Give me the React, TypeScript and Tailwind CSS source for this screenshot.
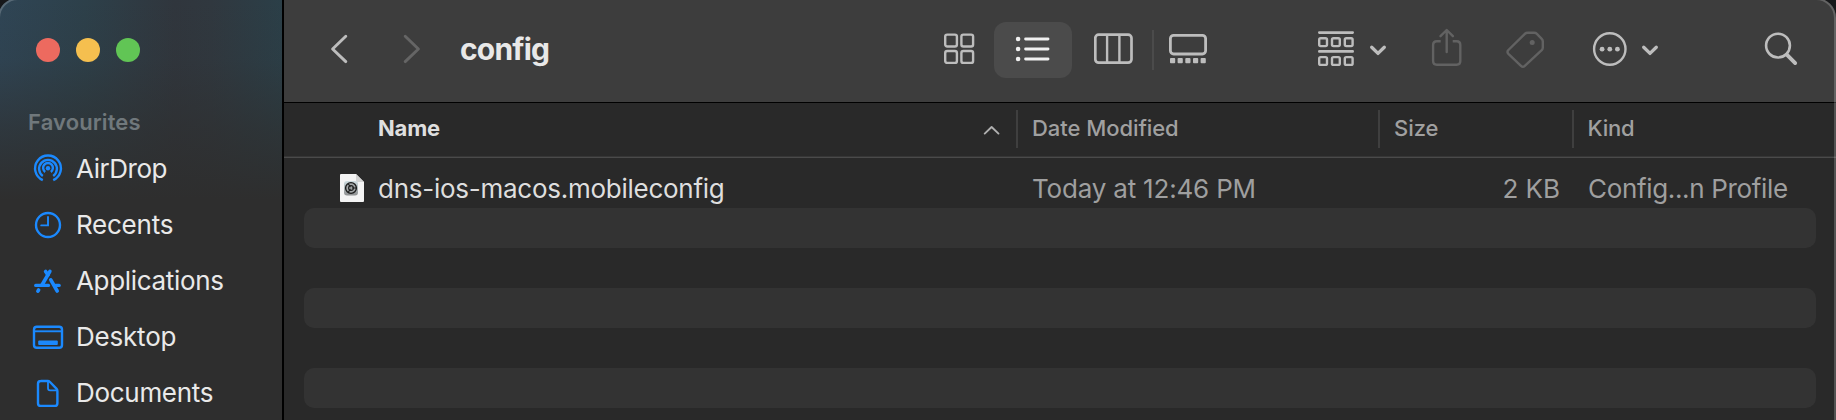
import type { ReactNode } from "react";

const favourites: { label: string; tracking: string; icon: ReactNode }[] = [
  {
    label: "AirDrop",
    tracking: "tracking-[-0.45px]",
    icon: (
      <>
        <circle cx="16" cy="27.3" r="2.2" fill="currentColor" stroke="none" />
        <path d="M13.2 30.9a4.9 4.9 0 1 1 5.6 0" />
        <path d="M10.8 35a8.9 8.9 0 1 1 10.4 0" />
        <path d="M10.8 39.2a12.9 12.9 0 1 1 10.4 0" />
      </>
    ),
  },
  {
    label: "Recents",
    tracking: "tracking-[-0.25px]",
    icon: (
      <>
        <circle cx="16" cy="28" r="12" />
        <path d="M16 20v8.4H9.2" strokeWidth="1.9" strokeLinecap="round" />
      </>
    ),
  },
  {
    label: "Applications",
    tracking: "tracking-[-0.32px]",
    icon: (
      <g strokeWidth="3.6" strokeLinecap="round">
        <path d="M17.9 18.4 10 32" />
        <path d="M13.6 18.4 16 22" />
        <path d="M18.8 26.8 25.2 38" />
        <path d="M3.7 32.4H16.5" strokeWidth="3.2" />
        <path d="M23.5 32.4H27.2" strokeWidth="3.2" />
        <path d="M6.6 37 5.9 38.2" />
      </g>
    ),
  },
  {
    label: "Desktop",
    tracking: "tracking-[-0.2px]",
    icon: (
      <>
        <rect x="2" y="17.7" width="28" height="21" rx="2.8" />
        <path d="M2 22.3H30" strokeWidth="1.9" />
        <rect x="6.2" y="31.6" width="19.6" height="4.4" rx="1" fill="currentColor" stroke="none" />
      </>
    ),
  },
  {
    label: "Documents",
    tracking: "tracking-[-0.3px]",
    icon: (
      <>
        <path d="M8.6 16H15.6Q17 16 18 17L24.4 23.6Q25.4 24.6 25.4 26V38.2Q25.4 40.9 22.7 40.9H8.7Q6 40.9 6 38.2V18.7Q6 16 8.7 16Z" />
        <path d="M16 16.5V23.2Q16 25.3 18.1 25.3H25" strokeWidth="1.8" />
      </>
    ),
  },
];

function Icon({ width, className, children }: { width: number; className?: string; children: ReactNode }) {
  return (
    <svg
      width={width}
      height={56}
      viewBox={`0 0 ${width} 56`}
      fill="none"
      stroke="currentColor"
      strokeWidth="2.4"
      className={`shrink-0 ${className ?? ""}`}
    >
      {children}
    </svg>
  );
}

function Sidebar() {
  return (
    <aside className="flex h-full w-[282px] shrink-0 flex-col bg-[linear-gradient(to_bottom,rgba(46,46,46,0)_0px,rgba(46,46,46,0.1)_60px,rgba(46,46,46,0.6)_130px,#2e2e2e_200px),linear-gradient(to_right,#2f4555_0%,#2d404a_30%,#30363d_62%,#30383f_75%,#2b3f48_100%)] pt-[38px]">
      <div className="flex gap-4 pl-9">
        <span className="size-6 rounded-full bg-[#ed6a5f]" />
        <span className="size-6 rounded-full bg-[#f5bf4f]" />
        <span className="size-6 rounded-full bg-[#61c555]" />
      </div>
      <h2 className="mt-[47px] mb-1.5 pl-7 text-[22px] leading-[26px] font-semibold tracking-[0.12px] text-[#70787c]">
        Favourites
      </h2>
      <nav>
        {favourites.map((f) => (
          <a key={f.label} className="flex h-14 items-center pl-8 text-[#1b89fe]">
            <Icon width={32}>{f.icon}</Icon>
            <span className={`ml-3 text-[26px] leading-[32px] text-[#e9e9e9] ${f.tracking}`}>{f.label}</span>
          </a>
        ))}
      </nav>
    </aside>
  );
}

function Toolbar() {
  return (
    <header className="flex h-[102px] shrink-0 items-start bg-[#3d3d3d] pt-[22px] text-[#bdbdbd]">
      <Icon width={24} className="ml-[44px]">
        <path d="M17.8 14.2 4.6 27 17.8 39.6" strokeWidth="2.9" strokeLinecap="round" strokeLinejoin="round" />
      </Icon>
      <Icon width={24} className="ml-[48px] text-[#656565]">
        <path d="M5.2 14.2 18.4 27 5.2 39.6" strokeWidth="2.9" strokeLinecap="round" strokeLinejoin="round" />
      </Icon>
      <h1 className="mt-[9px] ml-[36px] w-[480px] text-[30px] leading-[36px] font-bold tracking-[-0.8px] text-[#e8e8e8]">
        config
      </h1>
      <Icon width={38}>
        <rect x="5.2" y="12.6" width="11.7" height="11.9" rx="2" />
        <rect x="21.4" y="12.6" width="11.7" height="11.9" rx="2" />
        <rect x="5.2" y="29" width="11.7" height="11.9" rx="2" />
        <rect x="21.4" y="29" width="11.7" height="11.9" rx="2" />
      </Icon>
      <div className="ml-[16px] flex h-14 w-[78px] justify-center rounded-[12px] bg-[#4b4b4b] text-[#f0f0f0]">
        <Icon width={78}>
          <g fill="currentColor" stroke="none">
            <circle cx="24.1" cy="17" r="2.3" />
            <circle cx="24.1" cy="27" r="2.3" />
            <circle cx="24.1" cy="37" r="2.3" />
          </g>
          <path d="M31.6 17H54M31.6 27H54M31.6 37H54" strokeWidth="2.9" strokeLinecap="round" />
        </Icon>
      </div>
      <Icon width={40} className="ml-[22px]">
        <rect x="1.3" y="12.6" width="36.2" height="28.1" rx="3.4" strokeWidth="2.7" />
        <path d="M13.1 12.5V40.8M25.4 12.5V40.8" />
      </Icon>
      <span className="mt-2 ml-[18px] h-10 w-0.5 bg-[#4b4b4b]" />
      <Icon width={40} className="ml-[14px]">
        <rect x="2.4" y="13.4" width="35.2" height="18.6" rx="3.2" strokeWidth="2.8" />
        <g fill="currentColor" stroke="none">
          <rect x="2" y="36" width="5.2" height="5.2" rx="0.9" />
          <rect x="9.6" y="36" width="5.2" height="5.2" rx="0.9" />
          <rect x="17.3" y="36" width="5.2" height="5.2" rx="0.9" />
          <rect x="25" y="36" width="5.2" height="5.2" rx="0.9" />
          <rect x="32.6" y="36" width="5.2" height="5.2" rx="0.9" />
        </g>
      </Icon>
      <Icon width={38} className="ml-[109px]">
        <path d="M2.3 10.6H35.7M2.3 29.4H35.7" strokeWidth="2.6" strokeLinecap="round" />
        {[2.2, 15, 27.8].map((x) => (
          <g key={x}>
            <rect x={x} y="16.3" width="7.8" height="7.8" rx="1.5" />
            <rect x={x} y="35.1" width="7.8" height="7.8" rx="1.5" />
          </g>
        ))}
      </Icon>
      <Icon width={20} className="ml-[13px]">
        <path d="M3.7 25.2 10 31.4 16.3 25.2" strokeWidth="3.3" strokeLinecap="round" strokeLinejoin="round" />
      </Icon>
      <Icon width={32} className="ml-[43px] text-[#626262]">
        <path d="M9.7 19.2H5.8Q2.1 19.2 2.1 22.9V39.1Q2.1 42.8 5.8 42.8H25.6Q29.3 42.8 29.3 39.1V22.9Q29.3 19.2 25.6 19.2H21.7" />
        <path d="M15.7 30V8.6M9.5 14.2 15.7 8 21.9 14.2" strokeLinecap="round" strokeLinejoin="round" />
      </Icon>
      <Icon width={40} className="ml-[41px] text-[#626262]">
        <path
          d="M23.8 10.8H30.2Q31.8 10.8 32.9 11.9L37.7 16.9Q38.8 18 38.8 19.6V25.4Q38.8 27 37.7 28.1L20.8 43.9Q18.9 45.7 17 43.9L4.4 31.8Q2.6 29.9 4.4 28L20.6 12.1Q21.9 10.8 23.8 10.8Z"
          strokeLinejoin="round"
        />
        <circle cx="28.2" cy="20.6" r="2.5" fill="currentColor" stroke="none" />
      </Icon>
      <Icon width={38} className="ml-[48px]">
        <circle cx="17.8" cy="27" r="15.7" />
        <g fill="currentColor" stroke="none">
          <circle cx="10.1" cy="27.2" r="2.4" />
          <circle cx="17.8" cy="27.2" r="2.4" />
          <circle cx="25.4" cy="27.2" r="2.4" />
        </g>
      </Icon>
      <Icon width={20} className="ml-[10px]">
        <path d="M3.7 25.2 10 31.4 16.3 25.2" strokeWidth="3.3" strokeLinecap="round" strokeLinejoin="round" />
      </Icon>
      <Icon width={36} className="ml-[104px]">
        <circle cx="14" cy="23.6" r="11.9" strokeWidth="2.6" />
        <path d="M22.8 32.6 31.2 41.1" strokeWidth="3.8" strokeLinecap="round" />
      </Icon>
    </header>
  );
}

function ProfileFileIcon() {
  return (
    <svg width={24} height={28} viewBox="0 0 24 28" className="mt-[6px] shrink-0">
      <defs>
        <linearGradient id="badge" x1="0" y1="0" x2="0" y2="1">
          <stop offset="0" stopColor="#cfdde1" />
          <stop offset="1" stopColor="#8d8f90" />
        </linearGradient>
      </defs>
      <path d="M1 0H16L24 8V27Q24 28 23 28H1Q0 28 0 27V1Q0 0 1 0Z" fill="#f4f4f4" />
      <path d="M16 0 24 8H17.2Q16 8 16 6.8Z" fill="#d3d3d3" />
      <rect x="4" y="7" width="14" height="14.4" rx="3" fill="url(#badge)" />
      <circle cx="11" cy="14" r="5.4" fill="#a3a7a8" stroke="#1d1d1d" strokeWidth="1.4" />
      <circle cx="11" cy="14" r="2.4" fill="none" stroke="#1d1d1d" strokeWidth="1.1" />
      <path d="M11.9 14H16M10.4 13.2 8.3 9.6M10.4 14.8 8.3 18.4" stroke="#1d1d1d" strokeWidth="1.1" />
    </svg>
  );
}

function HeaderCell({ children, className }: { children: ReactNode; className: string }) {
  return <div className={`flex h-full pt-3 leading-[26px] ${className}`}>{children}</div>;
}

function ColumnRule() {
  return <span className="mt-[7px] h-[38px] w-0.5 shrink-0 bg-[#3f3f3f]" />;
}

function FileList() {
  return (
    <section className="flex min-h-0 flex-1 flex-col bg-[#292929]">
      <div className="flex h-[53px] shrink-0 text-[22px] font-medium text-[#a0a0a0]">
        <HeaderCell className="w-[732px] justify-between pr-[14px] pl-[94px]">
          <span className="font-bold tracking-[-0.2px] text-[#dfdfdf]">Name</span>
          <svg width={20} height={26} viewBox="0 0 20 26" fill="none" stroke="#b0b0b0" strokeWidth="1.9">
            <path d="M2.7 18.6 9.6 12 16.5 18.6" strokeLinecap="round" strokeLinejoin="round" />
          </svg>
        </HeaderCell>
        <ColumnRule />
        <HeaderCell className="w-[360px] pl-[14px] tracking-[-0.06px]">Date Modified</HeaderCell>
        <ColumnRule />
        <HeaderCell className="w-[192px] pl-[14px] tracking-[-0.06px]">Size</HeaderCell>
        <ColumnRule />
        <HeaderCell className="flex-1 pl-[13.5px] tracking-[-0.2px]">Kind</HeaderCell>
      </div>
      <div className="h-0.5 shrink-0 border-t border-[#363636] bg-[#4a4a4a]" />
      <div className="mt-[10px] flex h-10 shrink-0 pt-[5px] text-[26px] leading-[32px] text-[#9f9f9f]">
        <div className="-mt-[5px] flex w-[94px] justify-end pr-[14px]">
          <ProfileFileIcon />
        </div>
        <div className="w-[640px] tracking-[-0.26px] text-[#dedede]">dns-ios-macos.mobileconfig</div>
        <div className="w-[362px] pl-[14px] tracking-[-0.19px]">Today at 12:46 PM</div>
        <div className="w-[194px] pr-[14px] text-right tracking-[-0.05px]">2 KB</div>
        <div className="flex-1 pl-[14px] tracking-[-0.34px]">Config...n Profile</div>
      </div>
      <div className="flex flex-col gap-10 pr-5 pl-5">
        <div className="h-10 rounded-[10px] bg-[#333333]" />
        <div className="h-10 rounded-[10px] bg-[#333333]" />
        <div className="h-10 rounded-[10px] bg-[#333333]" />
      </div>
    </section>
  );
}

export default function App() {
  return (
    <div className="relative h-[420px] w-[1836px] overflow-hidden bg-[#17181a] font-['Inter',sans-serif] [font-weight:430]">
      <div className="flex h-full w-full [clip-path:inset(-2px_0px_0px_-2px_round_20px_20px_0px_0px)]">
        <Sidebar />
        <div className="w-0.5 shrink-0 bg-black" />
        <main className="flex min-w-0 flex-1 flex-col">
          <Toolbar />
          <div className="h-px shrink-0 bg-black" />
          <FileList />
        </main>
      </div>
      <div className="pointer-events-none absolute -top-0.5 right-0 -bottom-0.5 -left-0.5 rounded-t-[20px] border-2 border-white/20" />
    </div>
  );
}
